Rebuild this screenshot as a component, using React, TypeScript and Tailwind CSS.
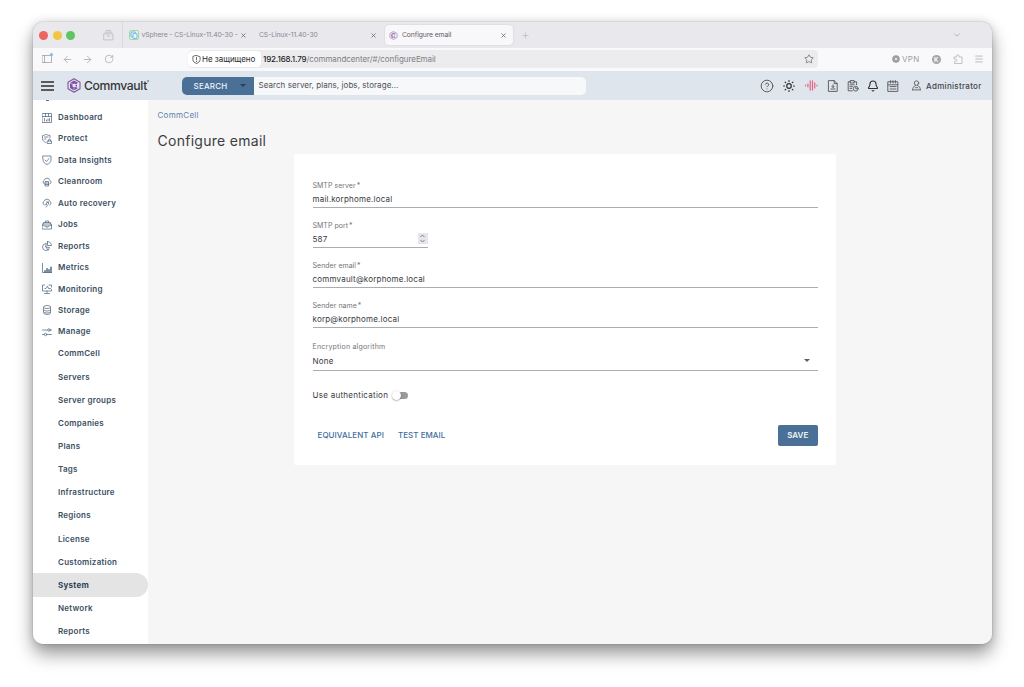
import type { ReactNode } from "react"
import clsx from "clsx"
import { ArrowLeft, ArrowRight, Bell, ChevronDown, CircleHelp, Menu, Plus, RotateCw, Star, X } from "lucide-react"

function Icon({ children, className = "w-[10px] h-[10px]" }: { children: ReactNode; className?: string }) {
  return (
    <svg
      viewBox="0 0 20 20"
      fill="none"
      stroke="currentColor"
      strokeWidth="1.5"
      strokeLinecap="round"
      strokeLinejoin="round"
      className={clsx("shrink-0", className)}
    >
      {children}
    </svg>
  )
}

const cloud = <path d="M5 14a4 4 0 0 1-.5-7.500A5.700 5.700 0 0 1 15.500 6.500 4 4 0 0 1 15.500 14" />

const mainItems = [
  {
    label: "Dashboard",
    icon: <path d="M1 1h18v18H1zM1 7h18M7 1v6M13 1v6M5 11v5M9 16v-2M12 16v-4M15 16v-5" />,
  },
  {
    label: "Protect",
    icon: <path d="M7 17C4 15 1 14 1 9V3c4 0 5-2 7-2s4 2 8 2v4M5 6h7M5 10h3M11 14h8v5h-8zM13 14v-2a2 2 0 0 1 4 0v2" />,
  },
  {
    label: "Data Insights",
    icon: <path d="M2 2h16v8c0 5-4 7-8 9-4-2-8-4-8-9zM6 10l3 3 5-6" />,
  },
  {
    label: "Cleanroom",
    icon: (
      <>
        {cloud}
        <path d="M7 9h6v9H7zM7 12h6M7 15h6" />
      </>
    ),
  },
  {
    label: "Auto recovery",
    icon: (
      <>
        {cloud}
        <path d="M8 18c3-1 3-3 2-5H7l5-5M9 8h4v4" />
      </>
    ),
  },
  {
    label: "Jobs",
    icon: <path d="M1 8h18v10H1zM3 8V5h14v3M7 5V2h6v3M1 11l6 1 3 3 3-3 6-1M7 12h6" />,
  },
  {
    label: "Reports",
    icon: <path d="M8 5a7 7 0 1 0 7 8l-7-1zM11 1v8h8a8 8 0 0 0-8-8M8 12l4 6" />,
  },
  {
    label: "Metrics",
    icon: <path d="M1 1v18h18M5 19v-4h2v4M9 19v-8h2v8M13 19v-6h2v6M17 19V8h2v11" />,
  },
  {
    label: "Monitoring",
    icon: <path d="M5 2H1v12h18v-3M10 14v4M5 19h10M6 9h2l3-5 2 5h4M14 2h5v4" />,
  },
  {
    label: "Storage",
    icon: <path d="M3 4c0-4 14-4 14 0v12c0 4-14 4-14 0zM3 5c1 3 13 3 14 0M3 10c1 3 13 3 14 0M3 14c1 3 13 3 14 0" />,
  },
  {
    label: "Manage",
    icon: (
      <>
        <path d="M1 6h10M17 6h2M1 15h3M10 15h9" />
        <circle cx="14" cy="6" r="2.500" />
        <circle cx="7" cy="15" r="2.500" />
      </>
    ),
  },
]

const manageItems = [
  "CommCell",
  "Servers",
  "Server groups",
  "Companies",
  "Plans",
  "Tags",
  "Infrastructure",
  "Regions",
  "License",
  "Customization",
  "System",
  "Network",
  "Reports",
]

function Logo({ className }: { className?: string }) {
  return (
    <svg viewBox="0 0 28 30" fill="none" className={clsx("shrink-0", className)}>
      <path d="M14 1.500l12 6.800v13.400l-12 6.800-12-6.800V8.300z" stroke="#8250a0" strokeWidth="2.200" strokeLinejoin="round" />
      <path d="M14 5l8 4.500-4 3-4-1.500-3 2v4l3 2 3-1 5 2-8 5-8-5V10z" fill="#8250a0" />
      <path d="M6 10l6 3M14 25v-5" stroke="#dfe5ed" strokeWidth="1.200" />
      <path d="M16 15l4-2v5z" fill="#8250a0" />
    </svg>
  )
}

function TabBar() {
  return (
    <div className="flex h-[26px] shrink-0 items-center bg-[#e9e8ed] text-[7px] text-[#89888d]">
      <div className="ml-[6px] flex gap-[4.500px]">
        <span className="size-[9px] rounded-full bg-[#ed6461]" />
        <span className="size-[9px] rounded-full bg-[#f3c545]" />
        <span className="size-[9px] rounded-full bg-[#5fc563]" />
      </div>
      <Icon className="ml-[28px] size-[11px] text-[#bdbcc1]">
        <path d="M2 7h16v11H2zM4 4h12M6 1h8M8 11h4" />
      </Icon>
      <div className="ml-[7.500px] h-full w-px bg-[#dbdade]" />
      <svg viewBox="0 0 20 20" className="ml-[6px] size-[10px] shrink-0" fill="none" strokeWidth="2">
        <rect x="1" y="1" width="18" height="18" rx="3" fill="#e4f3f8" stroke="#a7d5a4" />
        <rect x="4" y="4" width="9" height="10" rx="1" stroke="#62b9de" />
        <rect x="8" y="7" width="8" height="10" rx="1" fill="#e5f4fa" stroke="#70bedd" />
      </svg>
      <span className="ml-[3px] w-[97px] text-[6.800px] tracking-[-0.1px] whitespace-nowrap">
        vSphere - CS-Linux-11.40-30 -
      </span>
      <X className="ml-[1px] size-[7px] shrink-0 text-[#5d5d61]" strokeWidth={2.5} />
      <span className="ml-[12.500px] w-[111px] text-[6.800px] tracking-[-0.1px] whitespace-nowrap">CS-Linux-11.40-30</span>
      <X className="size-[7px] shrink-0 text-[#5d5d61]" strokeWidth={2.5} />
      <div className="ml-[8px] flex h-5 w-[128px] items-center rounded-[4px] bg-[#f8f7fa] pr-[6px] pl-[4px] text-[#626166] shadow-[0_0_2px_#0002]">
        <Logo className="size-[9px] opacity-70" />
        <span className="ml-[4px] flex-1 text-[6.800px] tracking-[-0.1px]">Configure email</span>
        <X className="size-[7px] text-[#5d5d61]" strokeWidth={2.5} />
      </div>
      <Plus className="ml-[8px] size-[9px] text-[#bcbbc0]" />
      <ChevronDown className="mr-[30px] ml-auto size-[10px] text-[#aaa9ae]" />
    </div>
  )
}

function AddressBar() {
  return (
    <div className="flex h-[23px] shrink-0 items-center bg-[#f9f9fb] pb-px text-[#b0b0b4]">
      <div className="relative ml-[9px]">
        <Icon className="size-[10px] text-[#9b9b9f]">
          <path d="M1 3h18v14H1zM5 3v14" />
        </Icon>
        <span className="absolute -top-px -right-px size-[3px] rounded-full bg-[#6fc0ef]" />
      </div>
      <ArrowLeft className="ml-[9.500px] size-[11px]" />
      <ArrowRight className="ml-[9.500px] size-[11px]" />
      <RotateCw className="ml-[11px] size-[10px]" />
      <div className="ml-[74px] flex h-[18px] w-[630px] items-center rounded-[4px] bg-[#ececee] pr-[4px] text-[8px]">
        <div className="flex h-[16px] w-[73px] items-center rounded-[4px] bg-white pl-[3.500px] text-[#29292d] shadow-[0_0_2px_#0001]">
          <Icon className="size-[9px]">
            <path d="M10 1l8 3v6c0 5-4 7-8 9-4-2-8-4-8-9V4zM10 5v6M10 14v1" />
          </Icon>
          <span className="ml-[1.500px] tracking-[-0.02px] whitespace-nowrap">Не защищено</span>
        </div>
        <span className="ml-[2px] flex-1 tracking-[-0.07px] text-[#7e7e82]">
          <span className="font-medium tracking-[-0.14px] text-[#1c1c1f]">192.168.1.79</span>
          /commandcenter/#/configureEmail
        </span>
        <Star className="size-[10px] text-[#75757a]" />
      </div>
      <div className="ml-[74px] flex items-center text-[8px] text-[#9e9ea3]">
        <svg viewBox="0 0 16 16" className="size-[8px]">
          <circle cx="8" cy="8" r="7.500" fill="#9c9ca1" />
          <path d="M5.500 5.500l5 5m0-5l-5 5" stroke="#fff" strokeWidth="1.500" />
        </svg>
        <span className="ml-[2px] tracking-[0.3px]">VPN</span>
      </div>
      <span className="ml-[12px] flex size-[9px] items-center justify-center rounded-full bg-[#a4a4a9] text-[6px] font-bold text-white">
        K
      </span>
      <Icon className="ml-[12px] size-[10px]">
        <path d="M3 6h4V4a2.500 2.500 0 0 1 5 0v2h6v13H3v-4h2a2.500 2.500 0 0 0 0-5H3z" />
      </Icon>
      <Menu className="ml-[11px] size-[10px]" />
    </div>
  )
}

function Header() {
  return (
    <div className="flex h-[29px] shrink-0 items-center bg-[#dfe5ed] text-[#555558]">
      <div className="ml-[8px] flex w-[13px] flex-col gap-[2px]">
        <span className="h-[2px] bg-[#5a5a5e]" />
        <span className="h-[2px] bg-[#5a5a5e]" />
        <span className="h-[2px] bg-[#5a5a5e]" />
      </div>
      <Logo className="ml-[13px] h-[15px] w-[14px]" />
      <span className="ml-[3px] flex w-[65px] items-start whitespace-nowrap text-[#353538]">
        <span className="text-[12.2px] leading-[14px] font-medium tracking-[-0.38px]">Commvault</span>
        <span className="mt-[2px] text-[3px] leading-none">®</span>
      </span>
      <div className="ml-[32.500px] flex h-[18px] w-[404px] items-center overflow-hidden rounded-[5px] bg-[#f7f8fa] pb-px text-[8px]">
        <div className="-mb-px flex h-[18px] w-[72px] items-center bg-[#4b7098] pl-[12px] font-medium text-[#eef3f8]">
          <span className="tracking-[0.22px]">SEARCH</span>
          <span className="mr-[8px] ml-auto h-0 w-0 border-x-[3px] border-t-[3px] border-x-transparent border-t-[#2a3d52]" />
        </div>
        <span className="ml-[5px] tracking-[0.06px] text-[#505054]">Search server, plans, jobs, storage...</span>
      </div>
      <div className="ml-[174px] flex items-center">
        <CircleHelp className="size-[14px]" strokeWidth={1.6} />
        <Icon className="ml-[9px] size-[12px] text-[#303034]">
          <circle cx="10" cy="10" r="3.800" strokeWidth="2" />
          <path
            d="M10 1v1.500M10 17.500V19M1 10h1.500M17.500 10H19M3.500 3.500l1 1M15.500 15.500l1 1M3.500 16.500l1-1M15.500 4.500l1-1"
            strokeWidth="2"
          />
        </Icon>
        <Icon className="ml-[10px] size-[13px] text-[#e65f7d]">
          <path d="M1 9.500v1M4.500 8v4M8 3v14M11.500 3v14M15 6v8M18.500 9.500v1" strokeWidth="1.800" />
        </Icon>
        <Icon className="ml-[9px] size-[12px]">
          <path d="M3 1h9l5 5v13H3zM12 1v5h5M10 8v4M8 10.500l2 2 2-2M6.500 15h7" />
        </Icon>
        <Icon className="ml-[8px] size-[12px]">
          <path d="M9 18H2V3h4M12 3h4v5M6 1h6v4H6zM5 8h7M5 11h4M5 14h3" />
          <circle cx="14.500" cy="14.500" r="4" />
          <path d="M14.500 12.500v2h1.500" />
        </Icon>
        <Bell className="ml-[8px] size-[12px] text-[#2f2f32]" strokeWidth={2.2} />
        <Icon className="ml-[8px] size-[12px]">
          <path d="M2 3h16v16H2zM2 8h16M6 1v4M10 1v4M14 1v4M5 11h10M5 15h10" />
        </Icon>
        <Icon className="ml-[12px] size-[11px]">
          <circle cx="10" cy="5.500" r="4" />
          <path d="M3 18c0-4 2-7 5-8M17 18c0-4-2-7-5-8M3 18h14M8 14h4" />
        </Icon>
        <span className="ml-[4.500px] text-[8px] font-medium tracking-[0.3px] whitespace-nowrap text-[#444448]">
          Administrator
        </span>
      </div>
    </div>
  )
}

function Sidebar() {
  return (
    <nav className="relative w-[115px] shrink-0 overflow-hidden bg-white pt-[6.300px] text-[8px] leading-none font-semibold text-[#3b4f61]">
      <span className="absolute top-0 left-[13px] h-[1px] w-[3px] bg-[#60768a]" />
      {mainItems.map((item) => (
        <div key={item.label} className="flex h-[21.450px] items-center whitespace-nowrap">
          <Icon className="mt-[1px] ml-[9px] size-[10px] text-[#536b80]">{item.icon}</Icon>
          <span className="ml-[6px] tracking-[0.26px]">{item.label}</span>
        </div>
      ))}
      <div className="-mt-[0.300px]">
        {manageItems.map((item) => (
          <div
            key={item}
            className={clsx(
              "flex h-[23.170px] items-center pl-[25px] tracking-[0.25px] whitespace-nowrap",
              item === "System" && "rounded-r-full bg-[#e4e4e5] font-bold text-[#2d4357]"
            )}
          >
            {item}
          </div>
        ))}
      </div>
    </nav>
  )
}

type FieldProps = { label: string; value: string; short?: boolean; children?: ReactNode }

function Field({ label, value, short, children }: FieldProps) {
  return (
    <div className={clsx("flex h-[40px] flex-col justify-end border-b border-[#acacae]", short ? "w-[115px]" : "w-full")}>
      <span className="text-[7px] leading-[9px] tracking-[0.03px] text-[#747478]">
        {label}
        <span className="ml-[1px]">*</span>
      </span>
      <div className="flex h-[17px] items-center text-[8px] tracking-[0.2px] text-[#39393c]">
        <span className="flex-1">{value}</span>
        {children}
      </div>
    </div>
  )
}

function EmailForm() {
  return (
    <div className="ml-[146px] h-[310.500px] w-[542px] rounded-[2px] bg-white px-[18.500px] pt-[14px]">
      <Field label="SMTP server" value="mail.korphome.local" />
      <Field label="SMTP port" value="587" short>
        <span className="flex h-[11px] w-[10px] items-center justify-center bg-[#e5e5eb] text-[#68686f]">
          <svg viewBox="0 0 10 18" fill="none" stroke="currentColor" strokeWidth="1.600" className="h-[9px] w-[5px]">
            <path d="M1 6l4-4 4 4M1 12l4 4 4-4" />
          </svg>
        </span>
      </Field>
      <Field label="Sender email" value="commvault@korphome.local" />
      <Field label="Sender name" value="korp@korphome.local" />
      <div className="flex h-[42.500px] flex-col border-b border-[#acacae] pt-[14px] text-[#39393c]">
        <span className="text-[7px] leading-[9px] tracking-[0.21px] text-[#747478]">Encryption algorithm</span>
        <div className="flex flex-1 items-center justify-between pt-[1px] text-[8px] tracking-[0.25px]">
          None
          <span className="mr-[8px] h-0 w-0 border-x-[3px] border-t-[3px] border-x-transparent border-t-[#606064]" />
        </div>
      </div>
      <div className="mt-[17.500px] flex h-[14px] items-center text-[8px] text-[#39393c]">
        <span className="w-[77px] tracking-[0.27px] whitespace-nowrap">Use authentication</span>
        <span className="ml-[2px] flex h-[7px] w-[16px] items-center rounded-full bg-linear-to-r from-white from-40% to-[#9a9a9c] to-40%">
          <span className="size-[9px] shrink-0 rounded-full bg-white shadow-[0_0.5px_1.5px_#0007]" />
        </span>
      </div>
      <div className="mt-[21.500px] flex h-[22px] items-center text-[8px] font-medium text-[#426e9c]">
        <span className="ml-[5px] w-[80.500px] tracking-[0.06px]">EQUIVALENT API</span>
        <span className="tracking-[0.02px]">TEST EMAIL</span>
        <button className="mt-px ml-auto h-[21px] w-[39.500px] rounded-[2px] bg-[#4b7098] font-semibold text-[#f0f5fa]">
          SAVE
        </button>
      </div>
    </div>
  )
}

export default function App() {
  return (
    <div className="h-[687px] w-[1024px] overflow-hidden bg-white pt-[22px] pl-[33px] font-['Inter',sans-serif]">
      <div className="flex h-[622px] w-[959px] flex-col overflow-hidden rounded-[10px] shadow-[0_0_1px_#0008,0_10px_18px_#0006,0_0_10px_#0002]">
        <TabBar />
        <AddressBar />
        <Header />
        <div className="flex min-h-0 flex-1">
          <Sidebar />
          <main className="flex-1 bg-[#f6f6f6] pl-[9.500px]">
            <div className="mt-[10px] h-[11px] text-[8px] leading-[11px] tracking-[0.28px] text-[#5f83aa]">CommCell</div>
            <h1 className="mt-[10.500px] mb-[4.500px] h-[18px] text-[14px] leading-[18px] tracking-[0.28px] text-[#3d3d40]">
              Configure email
            </h1>
            <div className="-ml-[9.500px]">
              <EmailForm />
            </div>
          </main>
        </div>
      </div>
    </div>
  )
}
